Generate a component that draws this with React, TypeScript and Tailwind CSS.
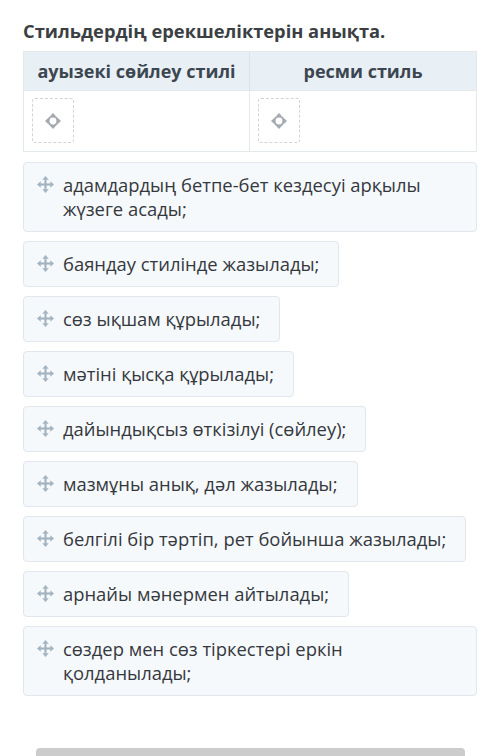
import React from 'react';

const ITEMS = [
  'адамдардың бетпе-бет кездесуі арқылы жүзеге асады;',
  'баяндау стилінде жазылады;',
  'сөз ықшам құрылады;',
  'мәтіні қысқа құрылады;',
  'дайындықсыз өткізілуі (сөйлеу);',
  'мазмұны анық, дәл жазылады;',
  'белгілі бір тәртіп, рет бойынша жазылады;',
  'арнайы мәнермен айтылады;',
  'сөздер мен сөз тіркестері еркін қолданылады;',
];

const MoveIcon: React.FC = () => (
  <svg width="17" height="17" viewBox="0 0 16 16" className="shrink-0 mt-[3px]">
    <g fill="#a3b4c0">
      <rect x="7" y="3" width="2" height="10" />
      <rect x="3" y="7" width="10" height="2" />
      <path d="M8 0 L11 3.5 H5 Z" />
      <path d="M8 16 L11 12.5 H5 Z" />
      <path d="M0 8 L3.5 5 V11 Z" />
      <path d="M16 8 L12.5 5 V11 Z" />
    </g>
  </svg>
);

const TargetIcon: React.FC = () => (
  <svg width="16" height="16" viewBox="0 0 16 16">
    <circle cx="8" cy="8" r="4.5" fill="none" stroke="#a5abb1" strokeWidth="2.2" />
    <g fill="#a5abb1">
      <path d="M8 0 L11 3.2 H5 Z" />
      <path d="M8 16 L11 12.8 H5 Z" />
      <path d="M0 8 L3.2 5 V11 Z" />
      <path d="M16 8 L12.8 5 V11 Z" />
    </g>
  </svg>
);

const Slot: React.FC = () => (
  <div className="w-[42px] h-[45px] border border-dashed border-[#cfd4d8] rounded-[3px] flex items-center justify-center">
    <TargetIcon />
  </div>
);

export default function App() {
  return (
    <div className="w-[500px] h-[756px] bg-white overflow-hidden relative" style={{ fontFamily: '"Open Sans", sans-serif' }}>
      <div className="px-[23px] pt-[18px]">
        <h1 className="text-[18.3px] leading-[26px] font-bold text-[#3b3f44] mb-[7px]">Стильдердің ерекшеліктерін анықта.</h1>

        <div className="border border-[#e3e8ec]">
          <div className="grid grid-cols-2 bg-[#e9f0f5]">
            <div className="h-[38px] flex items-center justify-center text-[18px] font-bold text-[#3c4650] border-r border-[#dbe2e7]">ауызекі сөйлеу стилі</div>
            <div className="h-[38px] flex items-center justify-center text-[18px] font-bold text-[#3c4650]">ресми стиль</div>
          </div>
          <div className="grid grid-cols-2 border-t border-[#e3e8ec]">
            <div className="h-[60px] px-[8px] pt-[7px] border-r border-[#e3e8ec]"><Slot /></div>
            <div className="h-[60px] px-[8px] pt-[7px]"><Slot /></div>
          </div>
        </div>

        <div className="mt-[10px] flex flex-col items-start gap-[9px]">
          {ITEMS.map((t, i) => (
            <div
              key={i}
              className={`flex gap-[9px] items-start bg-[#f6f9fc] border border-[#e1e7ec] rounded-[4px] pl-[13px] pr-[19px] py-[10px] text-[18.4px] leading-[24px] text-[#34383c] ${i === 0 || i === 8 ? 'w-full' : ''}`}
            >
              <MoveIcon />
              <span className={i === 8 ? 'max-w-[360px]' : ''}>{t}</span>
            </div>
          ))}
        </div>
      </div>

      <div className="absolute left-[36px] right-[35px] top-[748px] h-[20px] bg-[#cccccc] rounded-t-[4px]" />
    </div>
  );
}
